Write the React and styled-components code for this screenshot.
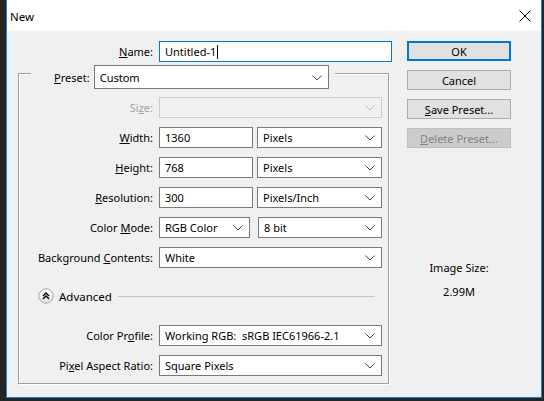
import styled, { createGlobalStyle } from "styled-components";

const GlobalStyle = createGlobalStyle`
    html, body {
        margin: 0;
        padding: 0;
        background: #252525;
        height: 401px;
        overflow: hidden;
    }
    body {
        font-family: "Segoe UI", "Noto Sans", "Open Sans", sans-serif;
        font-size: 11px;
        color: #000000;
    }
`;

function Chevron({ disabled }) {
    return (
        <svg width="10" height="6" viewBox="0 0 10 6">
            <polyline
                points="0.5,0.5 5,5 9.5,0.5"
                fill="none"
                stroke={disabled ? "#b8b8b8" : "#4a4a4a"}
                strokeWidth="1"
            />
        </svg>
    );
}

function Select({ value, width, height = 21, disabled }) {
    return (
        <SelectBox width={width} height={height} disabled={disabled}>
            <SelectText>{value}</SelectText>
            <ChevronBox disabled={disabled}>
                <Chevron disabled={disabled} />
            </ChevronBox>
        </SelectBox>
    );
}

function Field({ label, gap = 4, children }) {
    return (
        <Row>
            <Label>{label}</Label>
            <Fields gap={gap}>{children}</Fields>
        </Row>
    );
}

export default function App() {
    return (
        <>
            <GlobalStyle />
            <Window>
                <TitleBar>
                    <Title>New</Title>
                    <Close>
                        <svg width="12" height="12" viewBox="0 0 12 12">
                            <path d="M0.5 0.5 L11.5 11.5 M11.5 0.5 L0.5 11.5" stroke="#000" strokeWidth="1" />
                        </svg>
                    </Close>
                </TitleBar>
                <Body>
                    <LeftColumn>
                        <NameRow>
                            <NameLabel><u>N</u>ame:</NameLabel>
                            <NameInput>
                                Untitled-1<Caret />
                            </NameInput>
                        </NameRow>
                        <GroupBox>
                            <GroupHeader>
                                <HeaderLabel><u>P</u>reset:</HeaderLabel>
                                <Select value="Custom" width={241} height={24} />
                            </GroupHeader>
                            <Rows>
                                <Field label={<Muted>Si<u>z</u>e:</Muted>}>
                                    <Select value="" width={223} disabled />
                                </Field>
                                <Field label={<><u>W</u>idth:</>}>
                                    <TextInput width={94}>1360</TextInput>
                                    <Select value="Pixels" width={125} />
                                </Field>
                                <Field label={<><u>H</u>eight:</>}>
                                    <TextInput width={94}>768</TextInput>
                                    <Select value="Pixels" width={125} />
                                </Field>
                                <Field label={<><u>R</u>esolution:</>}>
                                    <TextInput width={94}>300</TextInput>
                                    <Select value="Pixels/Inch" width={125} />
                                </Field>
                                <Field label={<>Color <u>M</u>ode:</>} gap={8}>
                                    <Select value="RGB Color" width={91} />
                                    <Select value="8 bit" width={124} />
                                </Field>
                                <Field label={<>Background <u>C</u>ontents:</>}>
                                    <Select value="White" width={223} />
                                </Field>
                            </Rows>
                            <AdvancedRow>
                                <AdvancedIcon>
                                    <svg width="16" height="16" viewBox="0 0 16 16">
                                        <defs>
                                            <linearGradient id="adv" x1="0" y1="0" x2="0" y2="1">
                                                <stop offset="0" stopColor="#ffffff" />
                                                <stop offset="1" stopColor="#e2e2e2" />
                                            </linearGradient>
                                        </defs>
                                        <circle cx="8" cy="8" r="7.2" fill="url(#adv)" stroke="#a8a8a8" strokeWidth="1" />
                                        <polyline points="5,8 8,5 11,8" fill="none" stroke="#000" strokeWidth="1.3" />
                                        <polyline points="5,11 8,8 11,11" fill="none" stroke="#000" strokeWidth="1.3" />
                                    </svg>
                                </AdvancedIcon>
                                <AdvancedText>Advanced</AdvancedText>
                                <AdvancedLine />
                            </AdvancedRow>
                            <Rows top={21}>
                                <Field label={<>Color Pr<u>o</u>file:</>}>
                                    <Select value={"Working RGB:\u00a0 sRGB IEC61966-2.1"} width={223} />
                                </Field>
                                <Field label={<>Pi<u>x</u>el Aspect Ratio:</>}>
                                    <Select value="Square Pixels" width={223} />
                                </Field>
                            </Rows>
                        </GroupBox>
                    </LeftColumn>
                    <RightColumn>
                        <Button primary>OK</Button>
                        <Button>Cancel</Button>
                        <Button><u>S</u>ave Preset...</Button>
                        <Button disabled><u>D</u>elete Preset...</Button>
                        <ImageSize>
                            <span>Image Size:</span>
                            <span>2.99M</span>
                        </ImageSize>
                    </RightColumn>
                </Body>
            </Window>
        </>
    );
}

const Window = styled.div`
    margin-left: 6px;
    width: 536px;
    height: 398px;
    box-sizing: border-box;
    border: 1px solid #1883d7;
    border-top: none;
    background: #f0f0f0;
    display: flex;
    flex-direction: column;
`

const TitleBar = styled.div`
    height: 31px;
    background: #ffffff;
    display: flex;
    align-items: center;
    justify-content: space-between;
    padding: 0 10px 0 3px;
    flex-shrink: 0;
`

const Title = styled.span`
    font-size: 11.5px;
    color: #000000;
    margin-top: 1px;
`

const Close = styled.span`
    display: flex;
    margin-top: 1px;
`

const Body = styled.div`
    display: flex;
    gap: 15px;
    padding-top: 10px;
`

const LeftColumn = styled.div`
    width: 385px;
    display: flex;
    flex-direction: column;
`

const NameRow = styled.div`
    display: flex;
    align-items: center;
    gap: 6px;
`

const NameLabel = styled.span`
    width: 146px;
    text-align: right;
`

const NameInput = styled.div`
    width: 233px;
    height: 21px;
    box-sizing: border-box;
    border: 1px solid #0078d7;
    background: #ffffff;
    padding-left: 5px;
    display: flex;
    align-items: center;
`

const Caret = styled.span`
    display: inline-block;
    width: 1px;
    height: 14px;
    background: #000000;
    margin-left: 1px;
`

const GroupBox = styled.div`
    margin: 11px 0 0 11px;
    width: 371px;
    height: 311px;
    box-sizing: border-box;
    border: 1px solid #a0a0a0;
    box-shadow: inset 1px 1px 0 #ffffff, 1px 1px 0 #ffffff;
    display: flex;
    flex-direction: column;
`

const GroupHeader = styled.div`
    margin: -9px 0 0 12px;
    width: 304px;
    box-sizing: border-box;
    padding: 0 6px;
    background: #f0f0f0;
    display: flex;
    align-items: center;
    gap: 4px;
`

const HeaderLabel = styled.span`
    width: 54px;
    text-align: right;
`

const Rows = styled.div`
    display: flex;
    flex-direction: column;
    gap: 9px;
    margin-top: ${p => p.top ?? 8}px;
`

const Row = styled.div`
    display: flex;
    align-items: center;
    gap: 6px;
    height: 21px;
`

const Label = styled.span`
    width: 134px;
    text-align: right;
    white-space: nowrap;
`

const Muted = styled.span`
    color: #a0a0a0;
`

const Fields = styled.div`
    display: flex;
    align-items: center;
    gap: ${p => p.gap}px;
`

const TextInput = styled.div`
    width: ${p => p.width}px;
    height: 21px;
    box-sizing: border-box;
    border: 1px solid #7a7a7a;
    background: #ffffff;
    padding-left: 5px;
    display: flex;
    align-items: center;
`

const SelectBox = styled.div`
    width: ${p => p.width}px;
    height: ${p => p.height}px;
    box-sizing: border-box;
    border: 1px solid ${p => (p.disabled ? "#cccccc" : "#7a7a7a")};
    background: ${p => (p.disabled ? "#f0f0f0" : "#ffffff")};
    display: flex;
    align-items: center;
    padding-left: 5px;
`

const SelectText = styled.span`
    flex: 1;
    white-space: nowrap;
    overflow: hidden;
`

const ChevronBox = styled.span`
    width: 22px;
    align-self: stretch;
    display: flex;
    align-items: center;
    justify-content: center;
    padding-top: 1px;
`

const AdvancedRow = styled.div`
    display: flex;
    align-items: center;
    margin: 20px 0 0 19px;
    height: 16px;
`

const AdvancedIcon = styled.span`
    display: flex;
`

const AdvancedText = styled.span`
    margin-left: 5px;
    font-size: 11.5px;
`

const AdvancedLine = styled.span`
    margin-left: 6px;
    width: 257px;
    height: 1px;
    background: #c4c4c4;
`

const RightColumn = styled.div`
    width: 104px;
    display: flex;
    flex-direction: column;
    gap: 9px;
`

const Button = styled.div`
    height: 20px;
    box-sizing: border-box;
    border: ${p => (p.primary ? "2px solid #0078d7" : p.disabled ? "1px solid #bfbfbf" : "1px solid #adadad")};
    background: ${p => (p.disabled ? "#cccccc" : "#e1e1e1")};
    color: ${p => (p.disabled ? "#838383" : "#000000")};
    display: flex;
    align-items: center;
    justify-content: center;
`

const ImageSize = styled.div`
    margin-top: 103px;
    display: flex;
    flex-direction: column;
    align-items: center;
    gap: 9px;
`
